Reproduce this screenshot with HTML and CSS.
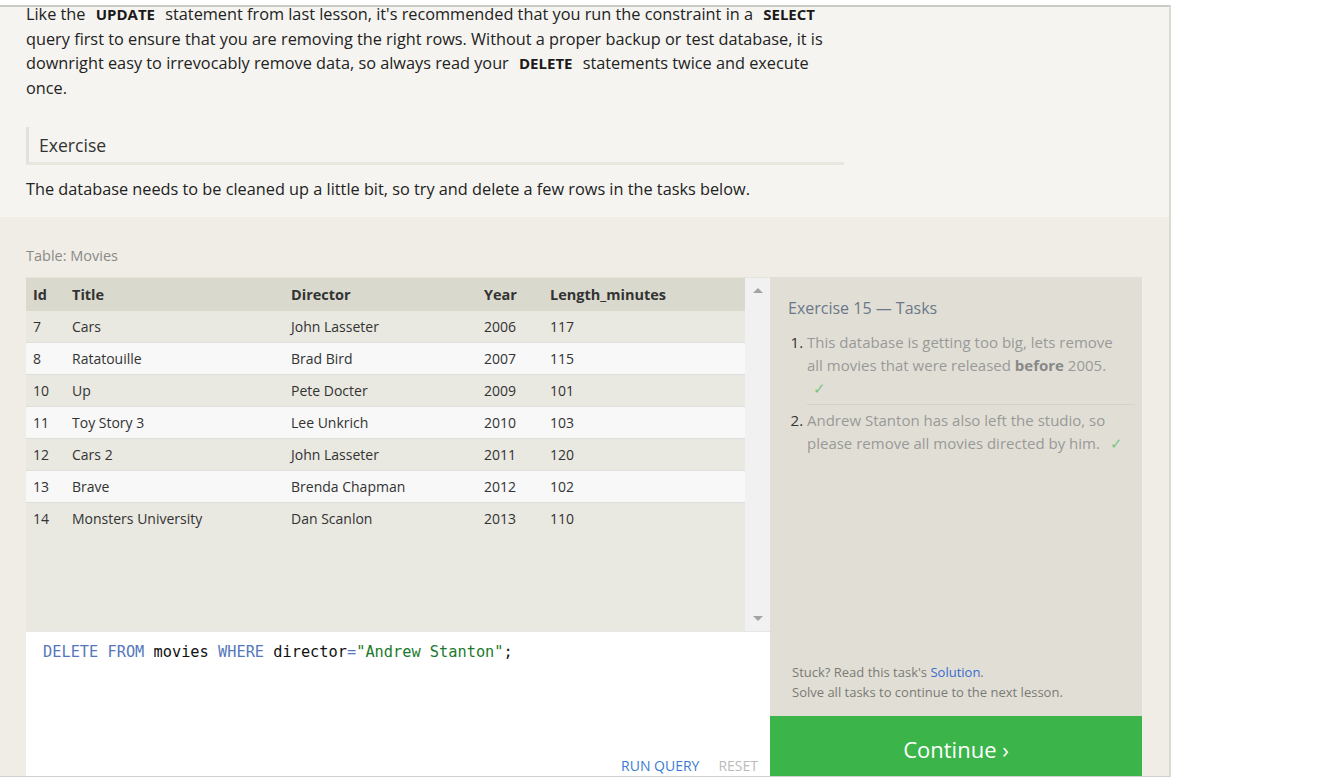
FILE: index.html
```html
<!DOCTYPE html>
<html>
<head>
<meta charset="utf-8">
<link rel="stylesheet" href="styles.css">
</head>
<body>
<div class="page">
  <section class="lesson">
    <p class="intro">Like the <code>UPDATE</code> statement from last lesson, it's recommended that you run the constraint in a <code>SELECT</code> query first to ensure that you are removing the right rows. Without a proper backup or test database, it is downright easy to irrevocably remove data, so always read your <code>DELETE</code> statements twice and execute once.</p>
    <h3 class="ex-title">Exercise</h3>
    <p class="ex-desc">The database needs to be cleaned up a little bit, so try and delete a few rows in the tasks below.</p>
  </section>
  <section class="workspace">
    <div class="table-label">Table: Movies</div>
    <div class="widget">
      <div class="left">
        <div class="results">
          <div class="table-wrap">
            <table class="movies">
              <thead>
                <tr><th class="c-id">Id</th><th class="c-title">Title</th><th class="c-dir">Director</th><th class="c-year">Year</th><th>Length_minutes</th></tr>
              </thead>
              <tbody>
                <tr><td>7</td><td>Cars</td><td>John Lasseter</td><td>2006</td><td>117</td></tr>
                <tr><td>8</td><td>Ratatouille</td><td>Brad Bird</td><td>2007</td><td>115</td></tr>
                <tr><td>10</td><td>Up</td><td>Pete Docter</td><td>2009</td><td>101</td></tr>
                <tr><td>11</td><td>Toy Story 3</td><td>Lee Unkrich</td><td>2010</td><td>103</td></tr>
                <tr><td>12</td><td>Cars 2</td><td>John Lasseter</td><td>2011</td><td>120</td></tr>
                <tr><td>13</td><td>Brave</td><td>Brenda Chapman</td><td>2012</td><td>102</td></tr>
                <tr><td>14</td><td>Monsters University</td><td>Dan Scanlon</td><td>2013</td><td>110</td></tr>
              </tbody>
            </table>
          </div>
          <div class="scrollbar">
            <span class="arrow up"></span>
            <span class="arrow down"></span>
          </div>
        </div>
        <div class="editor">
          <div class="code"><span class="kw">DELETE FROM</span> movies <span class="kw">WHERE</span> director<span class="kw">=</span><span class="str">"Andrew Stanton"</span>;</div>
          <div class="editor-actions"><span class="run">RUN QUERY</span><span class="reset">RESET</span></div>
        </div>
      </div>
      <aside class="tasks">
        <div class="tasks-body">
          <h4 class="tasks-title">Exercise 15 — Tasks</h4>
          <ol class="task-list">
            <li>This database is getting too big, lets remove all movies that were released <b>before</b> 2005.<br><span class="check">✓</span></li>
            <li>Andrew Stanton has also left the studio, so please remove all movies directed by him. <span class="check">✓</span></li>
          </ol>
        </div>
        <div class="stuck">
          <div>Stuck? Read this task's <span class="link">Solution</span>.</div>
          <div>Solve all tasks to continue to the next lesson.</div>
        </div>
        <div class="continue">Continue ›</div>
      </aside>
    </div>
  </section>
</div>
</body>
</html>
```

FILE: styles.css
```css
html, body {
  margin: 0;
  padding: 0;
  background: #ffffff;
}

body {
  font-family: "Open Sans", "Noto Sans", sans-serif;
  color: #222;
}

.page {
  width: 1169px;
  margin-top: 5px;
  border-top: 2px solid #c9cbc9;
  border-right: 2px solid #dcdad5;
  border-bottom: 1px solid #cfcfcf;
  overflow: hidden;
}

.lesson {
  display: flow-root;
  background: #f5f4f0;
  padding: 0 26px 0 26px;
  height: 210px;
  box-sizing: border-box;
}

.intro {
  margin: -5px 0 0 0;
  width: 805px;
  font-size: 16.3px;
  line-height: 24.7px;
  color: #222;
}

.intro code {
  font-family: "Open Sans", sans-serif;
  font-weight: 700;
  font-size: 15px;
  padding: 0 6px;
  color: #1a1a1a;
}

.ex-title {
  margin: 26px 0 0 0;
  width: 805px;
  font-weight: 400;
  font-size: 17.6px;
  color: #333;
  padding: 5px 0 4px 10px;
  border-left: 3px solid #e2e1da;
  border-bottom: 3px solid #e8e7df;
  line-height: 26px;
}

.ex-desc {
  margin: 12px 0 0 0;
  font-size: 16.3px;
  line-height: 24px;
  color: #222;
}

.workspace {
  background: #efede6;
  padding: 28px 27px 0 26px;
}

.table-label {
  font-size: 14.5px;
  color: #8a8a86;
  line-height: 22px;
  margin-bottom: 10px;
}

.widget {
  display: flex;
  height: 499px;
}

.left {
  width: 744px;
  display: flex;
  flex-direction: column;
}

.results {
  display: flex;
  height: 354px;
  background: #e9e8e1;
  border-top: 1px solid #e4e3dc;
  box-sizing: border-box;
}

.table-wrap {
  flex: 1;
}

.movies {
  width: 100%;
  border-collapse: collapse;
  font-size: 14px;
  color: #333;
}

.movies th {
  background: #dad9ce;
  text-align: left;
  font-weight: 700;
  font-size: 14.5px;
  height: 33px;
  padding: 0;
  color: #333;
}

.movies td {
  height: 31px;
  padding: 0;
  border-bottom: 1px solid #dedede;
}

.movies th:first-child,
.movies td:first-child {
  padding-left: 7px;
}

.c-id { width: 39px; }
.c-title { width: 219px; }
.c-dir { width: 193px; }
.c-year { width: 66px; }

.movies tbody tr:nth-child(odd) td { background: #e9e8e1; }
.movies tbody tr:nth-child(even) td { background: #f8f8f8; }
.movies tbody tr:last-child td { border-bottom: none; }

.scrollbar {
  width: 25px;
  background: #f1f1f1;
  display: flex;
  flex-direction: column;
  justify-content: space-between;
  align-items: center;
  padding: 10px 0 10px 0;
  box-sizing: border-box;
}

.arrow {
  width: 0;
  height: 0;
  border-left: 5px solid transparent;
  border-right: 5px solid transparent;
}

.arrow.up { border-bottom: 5px solid #a3a3a3; }
.arrow.down { border-top: 5px solid #a3a3a3; }

.editor {
  flex: 1;
  background: #ffffff;
  position: relative;
  border-top: 1px solid #e6e6e6;
}

.code {
  font-family: "DejaVu Sans Mono", monospace;
  font-size: 15.3px;
  color: #111;
  padding: 10px 0 0 17px;
  line-height: 20px;
}

.kw { color: #5677bd; }
.str { color: #1b7a2c; }

.editor-actions {
  position: absolute;
  right: 12px;
  bottom: 0;
  font-size: 14px;
  line-height: 20px;
}

.run { color: #3a7bd5; margin-right: 19px; }
.reset { color: #bbbbbb; }

.tasks {
  width: 372px;
  background: #e1dfd5;
  display: flex;
  flex-direction: column;
}

.tasks-body {
  flex: 1;
  padding: 20px 7px 0 18px;
}

.tasks-title {
  margin: 0;
  font-weight: 400;
  font-size: 16px;
  line-height: 22px;
  color: #6c7889;
}

.task-list {
  margin: 12px 0 0 0;
  padding: 0 0 0 19px;
  font-size: 15px;
  line-height: 23px;
  color: #999;
}

.task-list li {
  padding-right: 8px;
}

.task-list li::marker {
  color: #333;
}

.task-list li + li {
  border-top: 1px solid #d4d2c8;
  margin-top: 4px;
  padding-top: 4px;
}

.task-list b { color: #888; }

.check {
  color: #7dc383;
  margin-left: 6px;
}

.stuck {
  padding: 0 0 14px 22px;
  font-size: 13px;
  line-height: 20px;
  color: #7a7a76;
}

.link { color: #3a6ad0; }

.continue {
  height: 60px;
  box-sizing: border-box;
  padding-top: 6px;
  background: #3bb54a;
  color: #ffffff;
  font-size: 22px;
  display: flex;
  align-items: center;
  justify-content: center;
}
```
